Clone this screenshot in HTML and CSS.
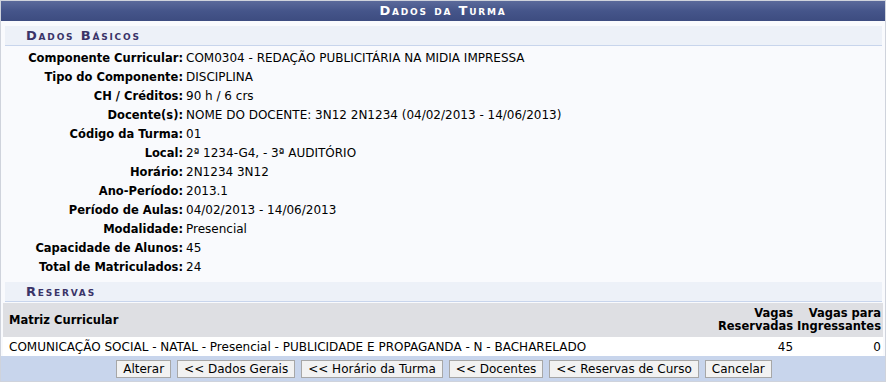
FILE: index.html
```html
<!DOCTYPE html>
<html lang="pt-BR">
<head>
<meta charset="utf-8">
<title>Dados da Turma</title>
<link rel="stylesheet" href="styles.css">
</head>
<body>
<div class="form">
  <div class="caption">Dados da Turma</div>
  <div class="content">
    <div class="sub">Dados Básicos</div>
    <div class="fields">
      <div class="lbl">Componente Curricular:</div><div class="val">COM0304 - REDAÇÃO PUBLICITÁRIA NA MIDIA IMPRESSA</div>
      <div class="lbl">Tipo do Componente:</div><div class="val">DISCIPLINA</div>
      <div class="lbl">CH / Créditos:</div><div class="val">90 h / 6 crs</div>
      <div class="lbl">Docente(s):</div><div class="val">NOME DO DOCENTE: 3N12 2N1234 (04/02/2013 - 14/06/2013)</div>
      <div class="lbl">Código da Turma:</div><div class="val">01</div>
      <div class="lbl">Local:</div><div class="val">2ª 1234-G4, - 3ª AUDITÓRIO</div>
      <div class="lbl">Horário:</div><div class="val">2N1234 3N12</div>
      <div class="lbl">Ano-Período:</div><div class="val">2013.1</div>
      <div class="lbl">Período de Aulas:</div><div class="val">04/02/2013 - 14/06/2013</div>
      <div class="lbl">Modalidade:</div><div class="val">Presencial</div>
      <div class="lbl">Capacidade de Alunos:</div><div class="val">45</div>
      <div class="lbl">Total de Matriculados:</div><div class="val">24</div>
    </div>
    <div class="sub sub-res">Reservas</div>
  </div>
  <table class="list">
    <thead>
      <tr>
        <th class="c-matriz">Matriz Curricular</th>
        <th class="num c-res">Vagas<br>Reservadas</th>
        <th class="num c-ing">Vagas para<br>Ingressantes</th>
      </tr>
    </thead>
    <tbody>
      <tr>
        <td>COMUNICAÇÃO SOCIAL - NATAL - Presencial - PUBLICIDADE E PROPAGANDA - N - BACHARELADO</td>
        <td class="num">45</td>
        <td class="num">0</td>
      </tr>
    </tbody>
  </table>
  <div class="footer">
    <button class="btn">Alterar</button>
    <button class="btn">&lt;&lt; Dados Gerais</button>
    <button class="btn">&lt;&lt; Horário da Turma</button>
    <button class="btn">&lt;&lt; Docentes</button>
    <button class="btn">&lt;&lt; Reservas de Curso</button>
    <button class="btn">Cancelar</button>
  </div>
</div>
</body>
</html>
```

FILE: styles.css
```css
html, body {
  margin: 0;
  padding: 0;
  background: #ffffff;
}
body {
  font-family: "DejaVu Sans", Verdana, sans-serif;
  font-size: 12px;
  color: #000;
}
.form {
  width: 884px;
  border: 1px solid #cfd3dc;
  background: #f9fafd;
}
.caption {
  height: 20px;
  line-height: 20px;
  text-align: center;
  color: #ffffff;
  font-weight: bold;
  font-variant: small-caps;
  letter-spacing: 1.8px;
  font-size: 13px;
  background: linear-gradient(#5b6a9b, #45558a 50%, #3d4c80);
}
.content {
  padding: 5px 3px 0 4px;
}
.sub {
  height: 19px;
  line-height: 20px;
  background: #edf1f8;
  border-bottom: 1px solid #c8d5ec;
  padding-left: 21px;
  color: #3a3468;
  font-weight: bold;
  font-variant: small-caps;
  letter-spacing: 1.8px;
  font-size: 13px;
}
.sub-res {
  margin-top: 6px;
}
.fields {
  display: grid;
  grid-template-columns: 181px 1fr;
  grid-auto-rows: 19px;
  align-items: center;
  padding-top: 2px;
}
.lbl {
  text-align: right;
  font-weight: bold;
  font-size: 11.5px;
  padding-right: 3px;
  white-space: nowrap;
}
.val {
  white-space: nowrap;
}
.list {
  width: 880px;
  margin: 1px 2px 0 2px;
  border-collapse: collapse;
}
.list th {
  background: #dedfe3;
  font-weight: bold;
  font-size: 11.5px;
  text-align: left;
  line-height: 13px;
  padding: 4px 2px;
  vertical-align: middle;
  white-space: nowrap;
}
.list th.c-matriz {
  padding-left: 6px;
  width: 100%;
}
.list th.num, .list td.num {
  text-align: right;
}
.list td {
  background: #ffffff;
  height: 19px;
  padding: 0 2px 0 6px;
  white-space: nowrap;
}
.list td.num {
  padding: 0 2px;
}
.footer {
  background: #c8d5ec;
  height: 25px;
  display: flex;
  justify-content: center;
  align-items: center;
  gap: 6px;
  padding-left: 2px;
}
.btn {
  font-family: "DejaVu Sans", Verdana, sans-serif;
  font-size: 12px;
  color: #000;
  background: #f2f2f2;
  border: 1px solid #a7a7a7;
  height: 18px;
  padding: 0 6px;
  margin: 0;
  line-height: 14px;
}
```
